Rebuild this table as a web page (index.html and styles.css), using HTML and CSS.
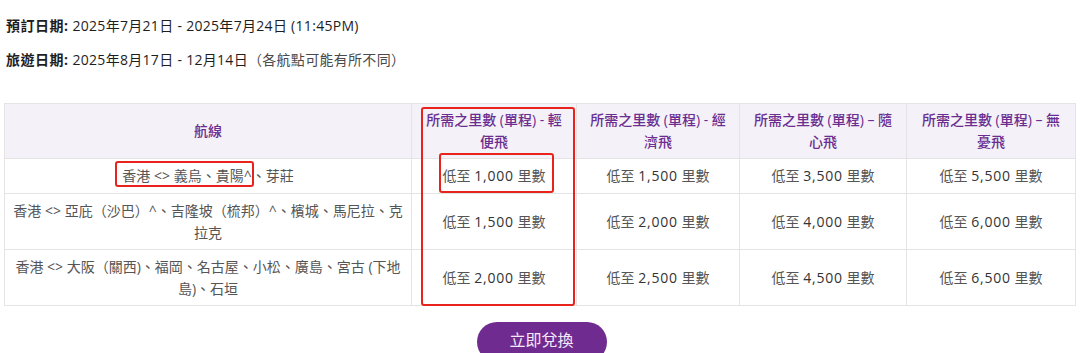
FILE: index.html
```html
<!DOCTYPE html>
<html lang="zh-Hant">
<head>
<meta charset="utf-8">
<title>里數兌換</title>
<link rel="stylesheet" href="styles.css">
</head>
<body>
<div class="page">
  <p class="info"><span class="label">預訂日期:</span> 2025年7月21日 - 2025年7月24日 (11:45PM)</p>
  <p class="info"><span class="label">旅遊日期:</span> 2025年8月17日 - 12月14日<span class="note">（各航點可能有所不同）</span></p>

  <div class="table-wrap">
    <table class="miles">
      <colgroup>
        <col class="c-route">
        <col class="c-a">
        <col class="c-b">
        <col class="c-c">
        <col class="c-d">
      </colgroup>
      <thead>
        <tr>
          <th>航線</th>
          <th>所需之里數 (單程) - 輕便飛</th>
          <th>所需之里數 (單程) - 經濟飛</th>
          <th>所需之里數 (單程) – 隨心飛</th>
          <th>所需之里數 (單程) – 無憂飛</th>
        </tr>
      </thead>
      <tbody>
        <tr>
          <td class="route">香港 &lt;&gt; 義烏、貴陽^、芽莊</td>
          <td>低至 <b>1,000</b> 里數</td>
          <td>低至 <b>1,500</b> 里數</td>
          <td>低至 <b>3,500</b> 里數</td>
          <td>低至 <b>5,500</b> 里數</td>
        </tr>
        <tr class="tall">
          <td class="route">香港 &lt;&gt; 亞庇（沙巴）^、吉隆坡（梳邦）^、檳城、馬尼拉、克拉克</td>
          <td>低至 <b>1,500</b> 里數</td>
          <td>低至 <b>2,000</b> 里數</td>
          <td>低至 <b>4,000</b> 里數</td>
          <td>低至 <b>6,000</b> 里數</td>
        </tr>
        <tr class="tall">
          <td class="route">香港 &lt;&gt; 大阪（關西)、福岡、名古屋、小松、廣島、宮古 (下地島)、石垣</td>
          <td>低至 <b>2,000</b> 里數</td>
          <td>低至 <b>2,500</b> 里數</td>
          <td>低至 <b>4,500</b> 里數</td>
          <td>低至 <b>6,500</b> 里數</td>
        </tr>
      </tbody>
    </table>
    <span class="mark mark-col"></span>
    <span class="mark mark-cell"></span>
    <span class="mark mark-route"></span>
  </div>

  <div class="actions">
    <button class="redeem" type="button">立即兌換</button>
  </div>
</div>
</body>
</html>
```

FILE: styles.css
```css
* { box-sizing: border-box; }

html, body {
  margin: 0;
  padding: 0;
  background: #ffffff;
}

body {
  font-family: "Open Sans", "Noto Sans CJK TC", sans-serif;
  font-size: 14px;
  color: #222;
}

.page {
  padding: 15px 5px 0 4px;
}

.info {
  margin: 0 0 12px 2px;
  font-size: 14px;
  line-height: 22px;
  letter-spacing: 0.3px;
  color: #1e1e1e;
}

.label {
  font-weight: 700;
  letter-spacing: 0.5px;
}

.note {
  color: #4a4a4a;
}

.table-wrap {
  position: relative;
  margin-top: 32px;
}

.miles {
  width: 1071px;
  table-layout: fixed;
  border-collapse: collapse;
  border: 1px solid #e4e4e4;
}

.c-route { width: 407px; }
.c-a { width: 165px; }
.c-b { width: 163px; }
.c-c { width: 167px; }
.c-d { width: 169px; }

.miles th,
.miles td {
  border: 1px solid #e4e4e4;
  text-align: center;
  vertical-align: middle;
  line-height: 22px;
  padding: 5px 8px;
}

.miles th {
  background: #f4f1f8;
  color: #6b2d90;
  font-weight: 500;
  font-size: 14px;
  height: 55px;
  padding: 5px 10px;
}

.miles td {
  color: #555;
  font-size: 14px;
  height: 35px;
}

.miles td.route {
  padding: 5px 6px;
}

.miles tr.tall td {
  height: 56px;
}

.miles td b {
  font-weight: 500;
  letter-spacing: 0.8px;
  color: #333;
}

.mark {
  position: absolute;
  border: 2px solid #e8231e;
  border-radius: 3px;
  pointer-events: none;
}

.mark-col {
  left: 417px;
  top: 4px;
  width: 154px;
  height: 199px;
}

.mark-cell {
  left: 435px;
  top: 50px;
  width: 115px;
  height: 40px;
}

.mark-route {
  left: 111px;
  top: 58px;
  width: 139px;
  height: 26px;
}

.actions {
  display: flex;
  justify-content: center;
  margin-top: 16px;
}

.redeem {
  width: 130px;
  height: 40px;
  border: none;
  border-radius: 20px;
  background: #6f2b8f;
  color: #f3e9f7;
  font-family: "Noto Sans CJK TC", sans-serif;
  font-size: 16px;
  padding: 0 0 6px;
  margin-left: 4px;
}
```
